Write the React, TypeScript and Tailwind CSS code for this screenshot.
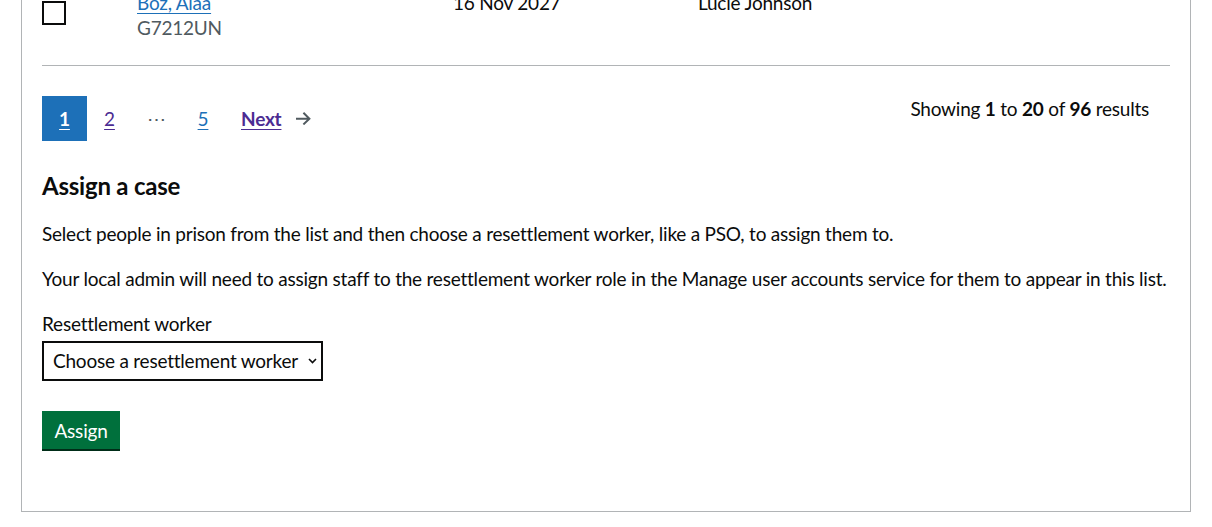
import React from "react";

const font = "font-['Lato',_'Liberation_Sans',_sans-serif] tracking-[-0.22px]";

function ArrowRight() {
  return (
    <svg width="15" height="13" viewBox="0 0 15 13" aria-hidden="true" className="fill-[#505a5f]">
      <path d="m8.107-0.0078125-1.4136 1.414 4.2926 4.293h-12.986v2h12.896l-4.1855 3.9766 1.377 1.4492 6.7441-6.4062-6.7246-6.7266z" />
    </svg>
  );
}

function Chevron() {
  return (
    <svg width="9" height="6" viewBox="0 0 9 6" aria-hidden="true">
      <path d="M1 1 L4.5 4.5 L8 1" fill="none" stroke="#0b0c0c" strokeWidth="1.6" />
    </svg>
  );
}

export default function App() {
  return (
    <div className={`bg-white w-[1212px] h-[527px] overflow-hidden text-[#0b0c0c] ${font}`}>
      <div className="ml-[21px] w-[1170px] border-x border-b border-[#b1b4b6] px-[20px] pb-[62px]">
        {/* Table row */}
        <div className="mt-[-10px] flex border-b border-[#b1b4b6] h-[76px] text-[19px] leading-[25px]">
          <div className="w-[95px] pt-[11px]">
            <div className="w-[24px] h-[24px] border-2 border-[#0b0c0c]" />
          </div>
          <div className="w-[316px]">
            <a href="#" className="text-[#1d70b8] underline underline-offset-[3px] decoration-1">Boz, Alaa</a>
            <div className="text-[#505a5f]">G7212UN</div>
          </div>
          <div className="w-[245px]">16 Nov 2027</div>
          <div className="flex-1">Lucie Johnson</div>
        </div>

        {/* Pagination */}
        <div className="mt-[30px] flex justify-between items-start text-[19px] leading-[25px]">
          <div className="flex items-center h-[45px]">
            <div className="w-[45px] h-[45px] bg-[#1d70b8] flex items-center justify-center">
              <span className="text-white font-bold underline underline-offset-[3px] decoration-1">1</span>
            </div>
            <div className="w-[45px] flex justify-center">
              <a href="#" className="text-[#4c2c92] underline underline-offset-[3px] decoration-1">2</a>
            </div>
            <div className="w-[48px] flex justify-center text-[#505a5f]">⋯</div>
            <div className="w-[46px] flex justify-center">
              <a href="#" className="text-[#1d70b8] underline underline-offset-[3px] decoration-1">5</a>
            </div>
            <a href="#" className="ml-[15px] flex items-center gap-[15px] text-[#4c2c92]">
              <span className="font-bold underline underline-offset-[3px] decoration-1">Next</span>
              <ArrowRight />
            </a>
          </div>
          <div className="mr-[21px]">
            Showing <b>1</b> to <b>20</b> of <b>96</b> results
          </div>
        </div>

        {/* Assign section */}
        <h2 className="mt-[30px] text-[24px] leading-[30px] font-bold">Assign a case</h2>
        <p className="mt-[20px] text-[19px] leading-[25px]">
          Select people in prison from the list and then choose a resettlement worker, like a PSO, to assign them to.
        </p>
        <p className="mt-[20px] text-[19px] leading-[25px] whitespace-nowrap">
          Your local admin will need to assign staff to the resettlement worker role in the Manage user accounts service for them to appear in this list.
        </p>
        <label className="block mt-[20px] text-[19px] leading-[25px]">Resettlement worker</label>
        <div className="mt-[5px] relative w-[281px] h-[40px] border-2 border-[#0b0c0c] flex items-center pl-[9px] text-[19px]">
          <span>Choose a resettlement worker</span>
          <span className="absolute right-[4px] top-[15px]"><Chevron /></span>
        </div>
        <button className="mt-[30px] w-[78px] h-[38px] bg-[#00703c] text-white text-[19px] leading-[25px] shadow-[0_2px_0_#002d18] flex items-center justify-center">
          Assign
        </button>
      </div>
    </div>
  );
}
